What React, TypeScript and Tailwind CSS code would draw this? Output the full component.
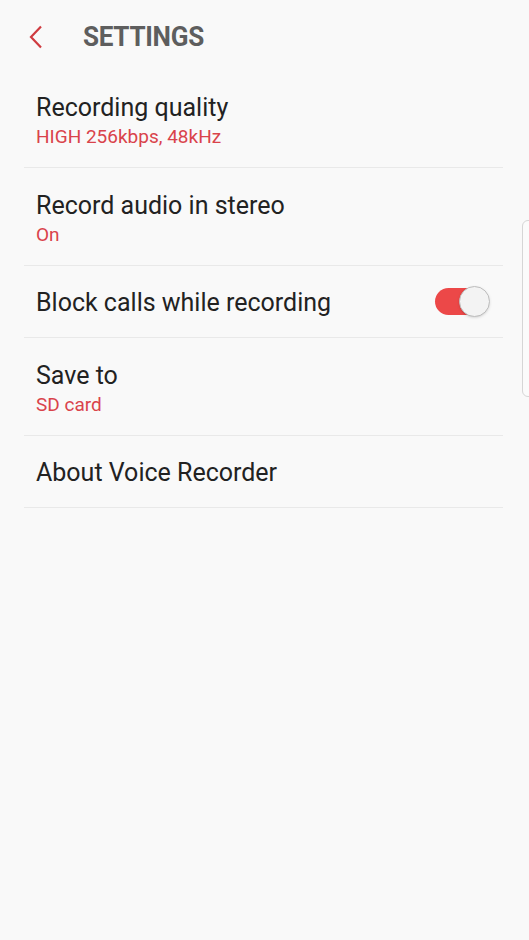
import { useState } from 'react';

const ITEMS: { title: string; sub?: string; toggle?: boolean }[] = [
  { title: 'Recording quality', sub: 'HIGH 256kbps, 48kHz' },
  { title: 'Record audio in stereo', sub: 'On' },
  { title: 'Block calls while recording', toggle: true },
  { title: 'Save to', sub: 'SD card' },
  { title: 'About Voice Recorder' },
];

function Toggle({ on, onChange }: { on: boolean; onChange: () => void }) {
  return (
    <button
      onClick={onChange}
      className={`relative w-[54px] h-[27px] rounded-full ${on ? 'bg-[#ec4848]' : 'bg-[#cfcfcf]'}`}
    >
      <span
        className={`absolute top-[-2px] w-[31px] h-[31px] rounded-full bg-[#f3f3f3] border border-[#bdbdbd] shadow-sm ${on ? 'right-[-1px]' : 'left-[-1px]'}`}
      />
    </button>
  );
}

export default function App() {
  const [blockCalls, setBlockCalls] = useState(true);

  return (
    <div className="relative min-h-[940px] w-full bg-[#f9f9f9] font-['Roboto',sans-serif] overflow-hidden">
      {/* Header */}
      <div className="h-[70px] flex items-center">
        <button className="w-[83px] h-full flex items-center pl-[28px] pt-[3px]">
          <svg width="16" height="24" viewBox="0 0 16 24" fill="none">
            <path d="M13 1.5 L3 12 L13 22.5" stroke="#cf3b40" strokeWidth="2.2" strokeLinejoin="miter" />
          </svg>
        </button>
        <h1 className="mt-[5px] text-[27px] font-bold text-[#5e5e5e] tracking-[-0.3px] scale-x-[0.965] origin-left">
          SETTINGS
        </h1>
      </div>

      {/* Rows */}
      <div className="px-[24px] mr-[2px]">
        {ITEMS.map((it) => (
          <div
            key={it.title}
            className={`flex items-center justify-between border-b border-[#e9e9e9] pl-[12px] pr-[14px] ${it.sub ? 'h-[98px]' : 'h-[72px]'}`}
          >
            <div className={`flex flex-col ${it.sub ? 'pt-[6px]' : 'pt-[3px]'}`}>
              <span className="text-[25px] leading-[30px] text-[#222222]">{it.title}</span>
              {it.sub && <span className="text-[19px] leading-[27px] text-[#d9434b]">{it.sub}</span>}
            </div>
            {it.toggle && <Toggle on={blockCalls} onChange={() => setBlockCalls(!blockCalls)} />}
          </div>
        ))}
      </div>

      {/* scroll indicator */}
      <div className="absolute left-[522px] top-[220px] w-[14px] h-[177px] rounded-[6px] border border-[#d6d6d6] bg-[#fbfbfb]" />
    </div>
  );
}
